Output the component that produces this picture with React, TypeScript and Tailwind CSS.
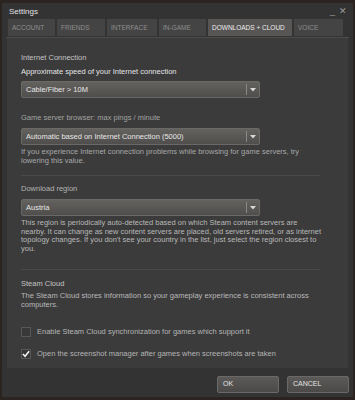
import React, { FC } from "react";

const tabs = [
  { name: "Account", w: "w-[47px]" },
  { name: "Friends", w: "w-[48px]" },
  { name: "Interface", w: "w-[50px]" },
  { name: "In-Game", w: "w-[47px]" },
  { name: "Downloads + Cloud", w: "w-[84px]" },
  { name: "Voice", w: "w-[49px]" },
];

const Select: FC<{ value: string; mt: string }> = ({ value, mt }) => (
  <div
    className={`${mt} flex h-[17px] w-[239px] items-center rounded-[2px] border border-[#6b6967] bg-gradient-to-b from-[#64625f] to-[#504e4c] text-[7.5px] text-[#e6e6e6]`}
  >
    <span className="flex-1 pl-[4px]">{value}</span>
    <span className="h-[11px] w-px bg-[#8a8886]" />
    <span className="flex w-[12px] justify-center">
      <svg width="6" height="4" viewBox="0 0 6 4">
        <path d="M0 0 L6 0 L3 3.5 Z" fill="#d8d8d8" />
      </svg>
    </span>
  </div>
);

const Check: FC<{ checked?: boolean; label: string; mt: string }> = ({ checked, label, mt }) => (
  <div className={`${mt} flex h-[12px] items-center gap-[6px]`}>
    <span className="flex h-[10px] w-[10px] items-center justify-center border border-[#575757] bg-[#383838]">
      {checked && (
        <svg width="9" height="8" viewBox="0 0 9 8">
          <path d="M1 4 L3.5 6.5 L8 1" stroke="#f2f2f2" strokeWidth="1.8" fill="none" />
        </svg>
      )}
    </span>
    <span className="text-[7.5px] text-[#b4b4b4]">{label}</span>
  </div>
);

const App: FC = () => {
  return (
    <div
      className="h-[400px] w-[355px] overflow-hidden bg-[#2a2320] px-[2px] pt-[3px]"
      style={{ fontFamily: '"Liberation Sans", Arial, sans-serif' }}
    >
      <div className="flex h-[394px] flex-col bg-[#333333]">
        {/* title bar */}
        <div className="flex h-[15px] items-center justify-between pl-[7px] pr-[6px] pt-[2px]">
          <span className="text-[8px] text-[#e2e2e2]">Settings</span>
          <span className="flex items-center gap-[4px] text-[9px] text-[#9a9a9a]">
            <span className="leading-none">_</span>
            <span className="leading-none">✕</span>
          </span>
        </div>

        {/* tabs */}
        <div className="mx-[4px] mt-[1px] flex gap-[2px] border-b border-[#4c4c4c] px-[2px] pb-[1px]">
          {tabs.map((t) => {
            const active = t.name === "Downloads + Cloud";
            return (
              <div
                key={t.name}
                className={`flex h-[17px] items-center whitespace-nowrap px-[4px] text-[6.5px] uppercase ${t.w} ${
                  active ? "bg-[#585654] text-[#ececec]" : "bg-[#444444] text-[#8e8e8e]"
                }`}
              >
                {t.name}
              </div>
            );
          })}
        </div>

        {/* panel */}
        <div className="mx-[5px] flex h-[330px] flex-col bg-[#3b3b3b] px-[14px] pt-[15px] text-[7.5px] leading-[10px]">
          <div className="h-[10px] text-[#c4c4c4]">Internet Connection</div>
          <div className="mt-[4px] h-[10px] text-[#e4e4e4]">Approximate speed of your Internet connection</div>
          <Select value="Cable/Fiber > 10M" mt="mt-[4px]" />
          <div className="mt-[15px] h-[10px] text-[#a2a2a2]">Game server browser: max pings / minute</div>
          <Select value="Automatic based on Internet Connection (5000)" mt="mt-[5px]" />
          <div className="mt-[2px] leading-[9px] text-[#a8a8a8]">
            If you experience Internet connection problems while browsing for game servers, try
            <br />
            lowering this value.
          </div>
          <div className="mt-[10px] h-px w-[299px] bg-[#4a4a4a]" />
          <div className="mt-[8px] h-[10px] text-[#b4b4b4]">Download region</div>
          <Select value="Austria" mt="mt-[5px]" />
          <div className="mt-[3px] leading-[8.7px] text-[#b8b8b8]">
            This region is periodically auto-detected based on which Steam content servers are
            <br />
            nearby. It can change as new content servers are placed, old servers retired, or as internet
            <br />
            topology changes. If you don't see your country in the list, just select the region closest to
            <br />
            you.
          </div>
          <div className="mt-[15px] h-px w-[299px] bg-[#4a4a4a]" />
          <div className="mt-[9px] h-[10px] text-[#c4c4c4]">Steam Cloud</div>
          <div className="mt-[2px] leading-[9px] text-[#b8b8b8]">
            The Steam Cloud stores information so your gameplay experience is consistent across
            <br />
            computers.
          </div>
          <Check label="Enable Steam Cloud synchronization for games which support it" mt="mt-[17px]" />
          <Check checked label="Open the screenshot manager after games when screenshots are taken" mt="mt-[10px]" />
        </div>

        {/* footer */}
        <div className="mt-[8px] flex justify-end gap-[8px] pr-[4px]">
          <button className="h-[17px] w-[62px] rounded-[2px] border border-[#6b6967] bg-gradient-to-b from-[#5c5a58] to-[#4c4a48] pl-[5px] text-left text-[7px] text-[#e4e4e4]">
            OK
          </button>
          <button className="h-[17px] w-[62px] rounded-[2px] border border-[#6b6967] bg-gradient-to-b from-[#5c5a58] to-[#4c4a48] pl-[5px] text-left text-[7px] text-[#e4e4e4]">
            CANCEL
          </button>
        </div>
      </div>
    </div>
  );
};

export default App;
